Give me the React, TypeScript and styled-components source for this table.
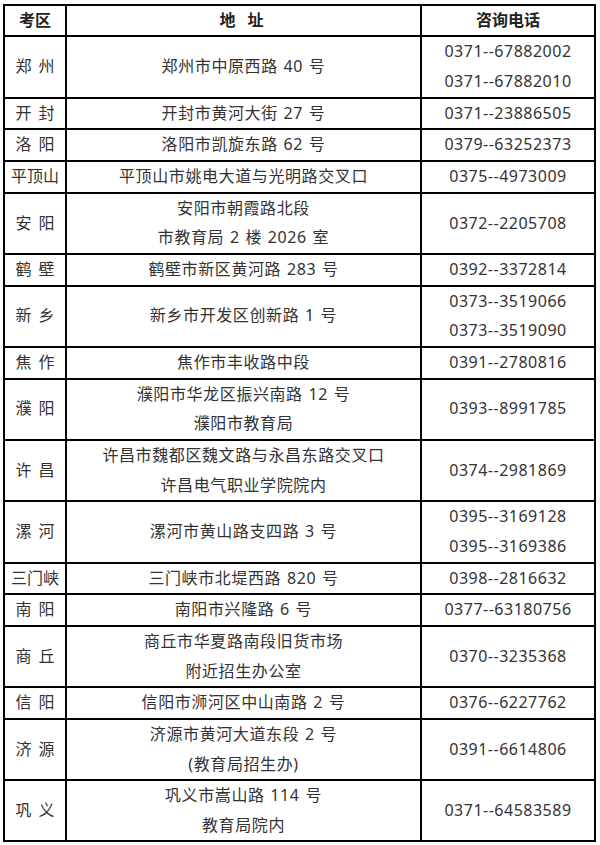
import React from "react";
import styled, { createGlobalStyle } from "styled-components";

const Global = createGlobalStyle`
  html, body { margin: 0; padding: 0; background: #fff; }
  body { font-family: "Noto Sans", "Noto Sans CJK SC", sans-serif; }
`;

const Page = styled.div`
  padding: 4px 0 0 3px;
`;

const Table = styled.table`
  border-collapse: collapse;
  width: 593px;
  table-layout: fixed;
  color: #333;
  font-size: 16px;
`;

const HeadCell = styled.th<{ $ls?: number }>`
  border: 2px solid #000;
  padding: 0;
  line-height: 29.4px;
  font-weight: 700;
  color: #222;
  text-align: center;
  letter-spacing: ${(p) => p.$ls ?? 0}px;
`;

const Cell = styled.td<{ $ls?: number; $ws?: number }>`
  border: 2px solid #000;
  padding: 0;
  line-height: 29.65px;
  text-align: center;
  vertical-align: middle;
  white-space: nowrap;
  letter-spacing: ${(p) => p.$ls ?? 0}px;
  word-spacing: ${(p) => p.$ws ?? 0}px;
`;

const Line = styled.div``;

type Row = { area: string; addr: string[]; tel: string[] };

const rows: Row[] = [
  { area: "郑 州", addr: ["郑州市中原西路 40 号"], tel: ["0371--67882002", "0371--67882010"] },
  { area: "开 封", addr: ["开封市黄河大街 27 号"], tel: ["0371--23886505"] },
  { area: "洛 阳", addr: ["洛阳市凯旋东路 62 号"], tel: ["0379--63252373"] },
  { area: "平顶山", addr: ["平顶山市姚电大道与光明路交叉口"], tel: ["0375--4973009"] },
  { area: "安 阳", addr: ["安阳市朝霞路北段", "市教育局 2 楼 2026 室"], tel: ["0372--2205708"] },
  { area: "鹤 壁", addr: ["鹤壁市新区黄河路 283 号"], tel: ["0392--3372814"] },
  { area: "新 乡", addr: ["新乡市开发区创新路 1 号"], tel: ["0373--3519066", "0373--3519090"] },
  { area: "焦 作", addr: ["焦作市丰收路中段"], tel: ["0391--2780816"] },
  { area: "濮 阳", addr: ["濮阳市华龙区振兴南路 12 号", "濮阳市教育局"], tel: ["0393--8991785"] },
  { area: "许 昌", addr: ["许昌市魏都区魏文路与永昌东路交叉口", "许昌电气职业学院院内"], tel: ["0374--2981869"] },
  { area: "漯 河", addr: ["漯河市黄山路支四路 3 号"], tel: ["0395--3169128", "0395--3169386"] },
  { area: "三门峡", addr: ["三门峡市北堤西路 820 号"], tel: ["0398--2816632"] },
  { area: "南 阳", addr: ["南阳市兴隆路 6 号"], tel: ["0377--63180756"] },
  { area: "商 丘", addr: ["商丘市华夏路南段旧货市场", "附近招生办公室"], tel: ["0370--3235368"] },
  { area: "信 阳", addr: ["信阳市浉河区中山南路 2 号"], tel: ["0376--6227762"] },
  { area: "济 源", addr: ["济源市黄河大道东段 2 号", "(教育局招生办)"], tel: ["0391--6614806"] },
  { area: "巩 义", addr: ["巩义市嵩山路 114 号", "教育局院内"], tel: ["0371--64583589"] },
];

export default function App() {
  return (
    <>
      <Global />
      <Page>
        <Table>
          <colgroup>
            <col style={{ width: 62 }} />
            <col style={{ width: 355 }} />
            <col style={{ width: 174 }} />
          </colgroup>
          <thead>
            <tr>
              <HeadCell>考区</HeadCell>
              <HeadCell $ls={4}>地 址</HeadCell>
              <HeadCell>咨询电话</HeadCell>
            </tr>
          </thead>
          <tbody>
            {rows.map((r) => (
              <tr key={r.area}>
                <Cell $ws={3}>{r.area}</Cell>
                <Cell $ls={0.6} $ws={1}>
                  {r.addr.map((a) => (
                    <Line key={a}>{a}</Line>
                  ))}
                </Cell>
                <Cell $ls={0.5}>
                  {r.tel.map((t) => (
                    <Line key={t}>{t}</Line>
                  ))}
                </Cell>
              </tr>
            ))}
          </tbody>
        </Table>
      </Page>
    </>
  );
}
